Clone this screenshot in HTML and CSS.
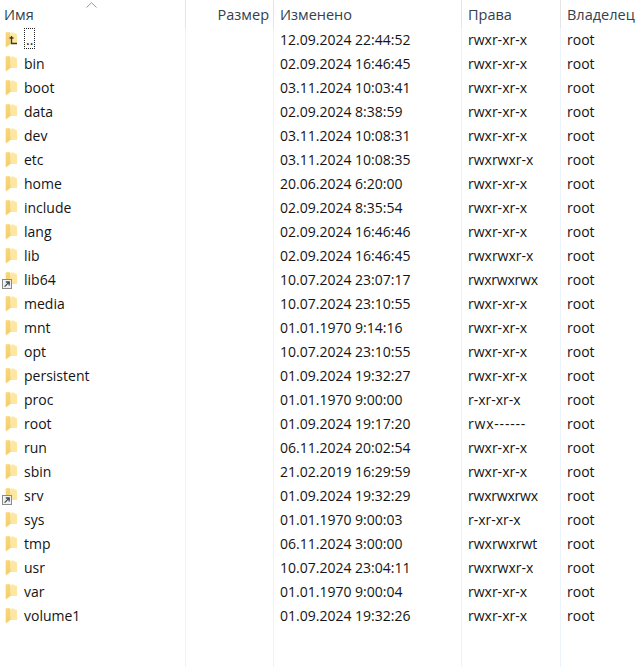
FILE: index.html
```html
<!DOCTYPE html>
<html lang="ru">
<head>
<meta charset="utf-8">
<title>Файлы</title>
<link rel="stylesheet" href="styles.css">
</head>
<body>
<svg class="defs" width="0" height="0" aria-hidden="true">
  <defs>
    <linearGradient id="fold" x1="0" y1="0" x2="1" y2="1">
      <stop offset="0" stop-color="#fdefb8"/>
      <stop offset="1" stop-color="#fbdf8e"/>
    </linearGradient>
    <linearGradient id="front" x1="0" y1="0" x2="0" y2="1">
      <stop offset="0" stop-color="#f7d77c"/>
      <stop offset="1" stop-color="#f3cf6c"/>
    </linearGradient>
    <symbol id="folder" viewBox="0 0 16 16">
      <path d="M3 .5h6l1.2 1.2h1.5V12H3z" fill="url(#fold)"/>
      <path d="M5 3 5.5 12H12L11.7 2.6z" fill="#fce6a0"/>
      <path d="M.7 .2h4.2L5.6 12 .7 15.4z" fill="url(#front)"/>
    </symbol>
  </defs>
</svg>
<table class="list">
  <colgroup><col class="c-name"><col class="c-size"><col class="c-date"><col class="c-perm"><col class="c-own"></colgroup>
  <thead>
    <tr><th><span class="sort"><svg width="11" height="6" viewBox="0 0 11 6"><path d="M.5 5.5 5.5.7l5 4.8" fill="none" stroke="#8e9aa6"/></svg></span>Имя</th><th class="right">Размер</th><th>Изменено</th><th>Права</th><th>Владелец</th></tr>
  </thead>
  <tbody>
    <tr><td><span class="nm"><span class="ic"><svg width="16" height="16"><use href="#folder"/></svg><svg class="up" width="11" height="11" viewBox="0 0 11 11"><path d="M3.5 1v7.5H9M1.5 3h4" fill="none" stroke="#3f3a28" stroke-width="1.3"/></svg></span><span class="focus">..</span></span></td><td></td><td>12.09.2024 22:44:52</td><td>rwxr-xr-x</td><td>root</td></tr>
    <tr><td><span class="nm"><span class="ic"><svg width="16" height="16"><use href="#folder"/></svg></span>bin</span></td><td></td><td>02.09.2024 16:46:45</td><td>rwxr-xr-x</td><td>root</td></tr>
    <tr><td><span class="nm"><span class="ic"><svg width="16" height="16"><use href="#folder"/></svg></span>boot</span></td><td></td><td>03.11.2024 10:03:41</td><td>rwxr-xr-x</td><td>root</td></tr>
    <tr><td><span class="nm"><span class="ic"><svg width="16" height="16"><use href="#folder"/></svg></span>data</span></td><td></td><td>02.09.2024 8:38:59</td><td>rwxr-xr-x</td><td>root</td></tr>
    <tr><td><span class="nm"><span class="ic"><svg width="16" height="16"><use href="#folder"/></svg></span>dev</span></td><td></td><td>03.11.2024 10:08:31</td><td>rwxr-xr-x</td><td>root</td></tr>
    <tr><td><span class="nm"><span class="ic"><svg width="16" height="16"><use href="#folder"/></svg></span>etc</span></td><td></td><td>03.11.2024 10:08:35</td><td>rwxrwxr-x</td><td>root</td></tr>
    <tr><td><span class="nm"><span class="ic"><svg width="16" height="16"><use href="#folder"/></svg></span>home</span></td><td></td><td>20.06.2024 6:20:00</td><td>rwxr-xr-x</td><td>root</td></tr>
    <tr><td><span class="nm"><span class="ic"><svg width="16" height="16"><use href="#folder"/></svg></span>include</span></td><td></td><td>02.09.2024 8:35:54</td><td>rwxr-xr-x</td><td>root</td></tr>
    <tr><td><span class="nm"><span class="ic"><svg width="16" height="16"><use href="#folder"/></svg></span>lang</span></td><td></td><td>02.09.2024 16:46:46</td><td>rwxr-xr-x</td><td>root</td></tr>
    <tr><td><span class="nm"><span class="ic"><svg width="16" height="16"><use href="#folder"/></svg></span>lib</span></td><td></td><td>02.09.2024 16:46:45</td><td>rwxrwxr-x</td><td>root</td></tr>
    <tr><td><span class="nm"><span class="ic"><svg width="16" height="16"><use href="#folder"/></svg><svg class="link" width="10" height="10" viewBox="0 0 10 10"><rect x=".5" y=".5" width="9" height="9" fill="#f1f1f1" stroke="#8a8a8a"/><path d="M2.6 7.6 6.6 3.6M3.8 3h3.4v3.4" fill="none" stroke="#3f4a57" stroke-width="1.3"/></svg></span>lib64</span></td><td></td><td>10.07.2024 23:07:17</td><td class="tight">rwxrwxrwx</td><td>root</td></tr>
    <tr><td><span class="nm"><span class="ic"><svg width="16" height="16"><use href="#folder"/></svg></span>media</span></td><td></td><td>10.07.2024 23:10:55</td><td>rwxr-xr-x</td><td>root</td></tr>
    <tr><td><span class="nm"><span class="ic"><svg width="16" height="16"><use href="#folder"/></svg></span>mnt</span></td><td></td><td>01.01.1970 9:14:16</td><td>rwxr-xr-x</td><td>root</td></tr>
    <tr><td><span class="nm"><span class="ic"><svg width="16" height="16"><use href="#folder"/></svg></span>opt</span></td><td></td><td>10.07.2024 23:10:55</td><td>rwxr-xr-x</td><td>root</td></tr>
    <tr><td><span class="nm"><span class="ic"><svg width="16" height="16"><use href="#folder"/></svg></span>persistent</span></td><td></td><td>01.09.2024 19:32:27</td><td>rwxr-xr-x</td><td>root</td></tr>
    <tr><td><span class="nm"><span class="ic"><svg width="16" height="16"><use href="#folder"/></svg></span>proc</span></td><td></td><td>01.01.1970 9:00:00</td><td>r-xr-xr-x</td><td>root</td></tr>
    <tr><td><span class="nm"><span class="ic"><svg width="16" height="16"><use href="#folder"/></svg></span>root</span></td><td></td><td>01.09.2024 19:17:20</td><td class="dashes">rwx------</td><td>root</td></tr>
    <tr><td><span class="nm"><span class="ic"><svg width="16" height="16"><use href="#folder"/></svg></span>run</span></td><td></td><td>06.11.2024 20:02:54</td><td>rwxr-xr-x</td><td>root</td></tr>
    <tr><td><span class="nm"><span class="ic"><svg width="16" height="16"><use href="#folder"/></svg></span>sbin</span></td><td></td><td>21.02.2019 16:29:59</td><td>rwxr-xr-x</td><td>root</td></tr>
    <tr><td><span class="nm"><span class="ic"><svg width="16" height="16"><use href="#folder"/></svg><svg class="link" width="10" height="10" viewBox="0 0 10 10"><rect x=".5" y=".5" width="9" height="9" fill="#f1f1f1" stroke="#8a8a8a"/><path d="M2.6 7.6 6.6 3.6M3.8 3h3.4v3.4" fill="none" stroke="#3f4a57" stroke-width="1.3"/></svg></span>srv</span></td><td></td><td>01.09.2024 19:32:29</td><td class="tight">rwxrwxrwx</td><td>root</td></tr>
    <tr><td><span class="nm"><span class="ic"><svg width="16" height="16"><use href="#folder"/></svg></span>sys</span></td><td></td><td>01.01.1970 9:00:03</td><td>r-xr-xr-x</td><td>root</td></tr>
    <tr><td><span class="nm"><span class="ic"><svg width="16" height="16"><use href="#folder"/></svg></span>tmp</span></td><td></td><td>06.11.2024 3:00:00</td><td>rwxrwxrwt</td><td>root</td></tr>
    <tr><td><span class="nm"><span class="ic"><svg width="16" height="16"><use href="#folder"/></svg></span>usr</span></td><td></td><td>10.07.2024 23:04:11</td><td>rwxrwxr-x</td><td>root</td></tr>
    <tr><td><span class="nm"><span class="ic"><svg width="16" height="16"><use href="#folder"/></svg></span>var</span></td><td></td><td>01.01.1970 9:00:04</td><td>rwxr-xr-x</td><td>root</td></tr>
    <tr><td><span class="nm"><span class="ic"><svg width="16" height="16"><use href="#folder"/></svg></span>volume1</span></td><td></td><td>01.09.2024 19:32:26</td><td>rwxr-xr-x</td><td>root</td></tr>
    <tr class="filler"><td></td><td></td><td></td><td></td><td></td></tr>
  </tbody>
</table>
</body>
</html>
```
FILE: styles.css
```css
html, body {
  margin: 0;
  height: 100%;
  background: #fff;
  overflow: hidden;
}
.defs { position: absolute; }
.list {
  border-collapse: separate;
  border-spacing: 0;
  table-layout: fixed;
  width: 638px;
  height: 667px;
  font: 14px/20px "Open Sans", "Noto Sans", sans-serif;
  color: #141414;
}
.c-name { width: 186px; }
.c-size { width: 88px; }
.c-date { width: 188px; }
.c-perm { width: 99px; }
.c-own { width: 77px; }
th {
  height: 28px;
  padding: 2px 0 0 6px;
  box-sizing: border-box;
  font-size: 14.5px;
  font-weight: 400;
  text-align: left;
  color: #34404c;
  border-right: 1px solid #e5e5e5;
  position: relative;
  white-space: nowrap;
}
th:first-child { padding-left: 4px; }
th.right { text-align: right; padding-right: 4px; }
th:last-child { border-right: 0; }
td {
  height: 24px;
  padding: 0 0 0 6px;
  box-sizing: border-box;
  border-right: 1px solid #edf3fa;
  white-space: nowrap;
}
td:last-child { border-right: 0; }
td:first-child { padding-left: 5px; }
td.dashes { letter-spacing: .8px; }
td.tight { letter-spacing: -.2px; }
.filler td { height: auto; }
.sort {
  position: absolute;
  left: 86px;
  top: 2px;
  line-height: 0;
}
.nm { display: flex; align-items: center; height: 24px; }
.ic {
  position: relative;
  width: 16px;
  height: 16px;
  margin-right: 3px;
  flex: none;
}
.up { position: absolute; left: 3px; top: 3px; }
.link { position: absolute; left: -3px; top: 7px; }
.focus {
  display: block;
  align-self: flex-start;
  height: 21px;
  width: 11px;
  outline: 1px dotted #222;
  outline-offset: -1px;
  padding-left: 2px;
  box-sizing: border-box;
  line-height: 24px;
}
```
